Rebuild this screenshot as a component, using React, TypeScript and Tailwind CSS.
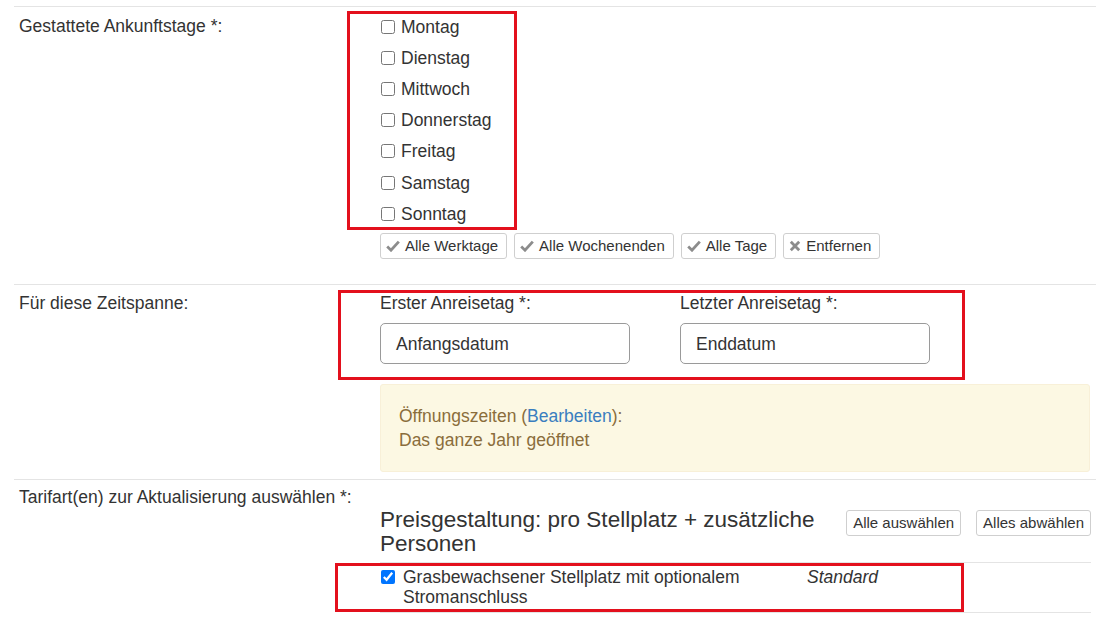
import React from "react";

const days = ["Montag", "Dienstag", "Mittwoch", "Donnerstag", "Freitag", "Samstag", "Sonntag"];

function CheckIcon() {
  return (
    <svg width="14" height="12" viewBox="0 0 14 12" className="shrink-0">
      <path d="M1.2 6.6 L5 10.2 L12.8 1.6" fill="none" stroke="#8c8c8c" strokeWidth="2.8" strokeLinejoin="miter" />
    </svg>
  );
}

function XIcon() {
  return (
    <svg width="12" height="12" viewBox="0 0 12 12" className="shrink-0">
      <path d="M1.8 1.8 L10.2 10.2 M10.2 1.8 L1.8 10.2" fill="none" stroke="#8c8c8c" strokeWidth="2.8" />
    </svg>
  );
}

function SmallButton({ icon, label }: { icon: React.ReactNode; label: string }) {
  return (
    <button className="flex items-center gap-[5px] h-[26px] pl-[5px] pr-[8px] border border-[#cfcfcf] rounded-[3px] bg-white text-[15px] leading-[20px] text-[#333]">
      {icon}
      <span>{label}</span>
    </button>
  );
}

function PlainButton({ label }: { label: string }) {
  return (
    <button className="h-[26px] px-[6px] border border-[#cfcfcf] rounded-[3px] bg-white text-[15px] leading-[20px] text-[#333]">
      {label}
    </button>
  );
}

export default function App() {
  return (
    <div
      className="relative w-[1112px] h-[632px] bg-white overflow-hidden text-[#333]"
      style={{ fontFamily: '"Liberation Sans", Arial, sans-serif' }}
    >
      <div className="pt-[6px] pl-[14px] pr-[16px]">
        {/* Section 1 */}
        <section className="flex border-t border-[#e4e4e4]">
          <div className="w-[366px] pl-[5px] pt-[8px] text-[17.5px] leading-[22px]">Gestattete Ankunftstage *:</div>
          <div className="flex-1 pt-[4px] pb-[25px]">
            {days.map((d) => (
              <label key={d} className="flex items-center h-[31.2px] gap-[6px] text-[17.5px] leading-[22px]">
                <input type="checkbox" className="w-[14px] h-[14px] m-0 ml-[1px]" />
                <span>{d}</span>
              </label>
            ))}
            <div className="flex gap-[7px] mt-[4px]">
              <SmallButton icon={<CheckIcon />} label="Alle Werktage" />
              <SmallButton icon={<CheckIcon />} label="Alle Wochenenden" />
              <SmallButton icon={<CheckIcon />} label="Alle Tage" />
              <SmallButton icon={<XIcon />} label="Entfernen" />
            </div>
          </div>
        </section>

        {/* Section 2 */}
        <section className="flex border-t border-[#e4e4e4]">
          <div className="w-[366px] pl-[5px] pt-[7px] text-[17.5px] leading-[22px]">Für diese Zeitspanne:</div>
          <div className="flex-1 pt-[7px] pb-[7px] pr-[6px]">
            <div className="flex gap-[50px]">
              <div className="w-[250px]">
                <div className="text-[17.5px] leading-[22px]">Erster Anreisetag *:</div>
                <div className="mt-[9px] h-[41px] border border-[#9a9a9a] rounded-[5px] flex items-center pl-[15px] text-[17.5px]">
                  Anfangsdatum
                </div>
              </div>
              <div className="w-[250px]">
                <div className="text-[17.5px] leading-[22px]">Letzter Anreisetag *:</div>
                <div className="mt-[9px] h-[41px] border border-[#9a9a9a] rounded-[5px] flex items-center pl-[15px] text-[17.5px]">
                  Enddatum
                </div>
              </div>
            </div>
            <div className="mt-[20px] bg-[#fcf8e3] border border-[#f8f0d8] rounded-[3px] pt-[19px] pb-[19px] px-[18px] text-[17.5px] leading-[24px] text-[#8a6d3b]">
              <div>
                Öffnungszeiten (<span className="text-[#3a7ebf]">Bearbeiten</span>):
              </div>
              <div>Das ganze Jahr geöffnet</div>
            </div>
          </div>
        </section>

        {/* Section 3 */}
        <section className="flex border-t border-[#e4e4e4]">
          <div className="w-[366px] pl-[5px] pt-[6px] text-[17.5px] leading-[22px]">
            Tarifart(en) zur Aktualisierung auswählen *:
          </div>
          <div className="flex-1 pt-[28px] pr-[5px]">
            <div className="flex items-start">
              <h4 className="flex-1 text-[22.5px] leading-[24px] font-normal text-[#333]">
                Preisgestaltung: pro Stellplatz + zusätzliche Personen
              </h4>
              <div className="flex gap-[15px] ml-[16px] mt-[2px]">
                <PlainButton label="Alle auswählen" />
                <PlainButton label="Alles abwählen" />
              </div>
            </div>
            <div className="mt-[6px] border-t border-b border-[#e4e4e4] flex pt-[4px] pb-[5px]">
              <div className="w-[420px] flex items-start gap-[8px]">
                <input type="checkbox" defaultChecked className="w-[14px] h-[14px] m-0 ml-[1px] mt-[3px] shrink-0" />
                <span className="text-[17.5px] leading-[20px]">Grasbewachsener Stellplatz mit optionalem Stromanschluss</span>
              </div>
              <div className="pl-[7px] text-[17.5px] leading-[20px] italic">Standard</div>
            </div>
          </div>
        </section>
      </div>

      {/* Annotation overlays */}
      <div className="absolute left-[347px] top-[11px] w-[170px] h-[219px] border-[3px] border-[#e3101d] pointer-events-none" />
      <div className="absolute left-[338px] top-[290px] w-[627px] h-[90px] border-[3px] border-[#e3101d] pointer-events-none" />
      <div className="absolute left-[335px] top-[563px] w-[629px] h-[49px] border-[3px] border-[#e3101d] pointer-events-none" />
    </div>
  );
}
